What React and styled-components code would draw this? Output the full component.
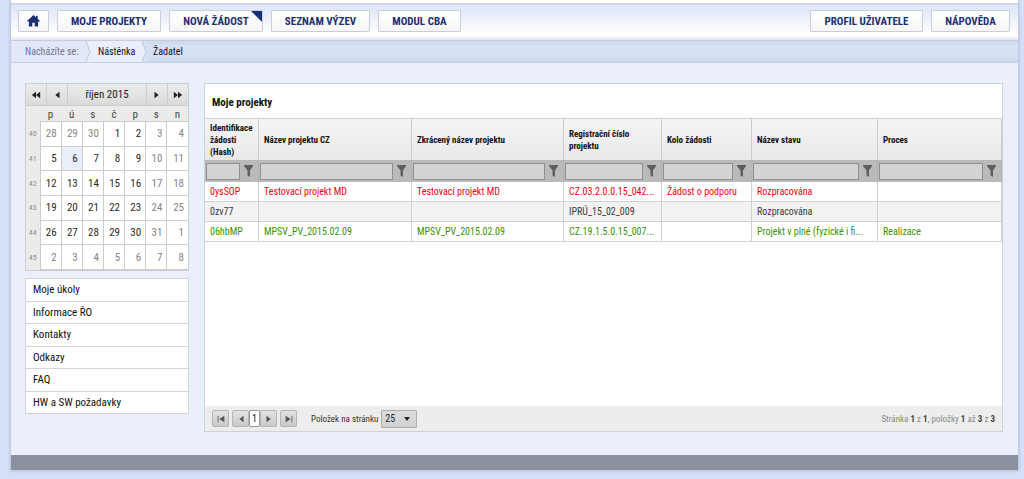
import React from "react";
import styled, { createGlobalStyle } from "styled-components";

const GlobalStyle = createGlobalStyle`
  * {
    box-sizing: border-box;
  }
  body {
    margin: 0;
    background-color: #d6dff6;
    font-family: "Roboto Condensed", "Liberation Sans Narrow", "Roboto", sans-serif;
    font-size: 11px;
    color: #111111;
  }
  button, input, select {
    font-family: inherit;
  }
`;

const Page = styled.div`
  display: flex;
  flex-direction: column;
  min-height: 100vh;
  padding: 0 5px 9px 10px;
`;
const Shell = styled.div`
  flex: 1;
  display: flex;
  flex-direction: column;
  background-color: #ebeffc;
  border-left: 1px solid #bfc8e4;
  border-right: 1px solid #bfc8e4;
  box-shadow: 0 1px 3px #b4bfdf;
`;
const Header = styled.header`
  display: flex;
  align-items: flex-start;
  justify-content: space-between;
  height: 40px;
  padding: 7px 8px 0 7px;
  border-top: 3px solid #ffffff;
  background: linear-gradient(to bottom, #ccd3e6 0, #ccd3e6 1px, #dde4f8 2px, #ffffff 31px, #ffffff 33px, #dfe4f0 37px);
`;
const Nav = styled.nav`
  display: flex;
  gap: 8px;
`;
const NavButton = styled.button`
  position: relative;
  display: flex;
  align-items: center;
  justify-content: center;
  width: ${(props) => props.$width}px;
  height: 22px;
  padding: 0;
  border: 1px solid #c9cdd8;
  border-radius: 1px;
  background: linear-gradient(to bottom, #ffffff, #f5f5f7);
  color: #1b2f72;
  font-size: 11px;
  font-weight: 700;
  white-space: nowrap;
  text-transform: uppercase;
`;
const Corner = styled.span`
  position: absolute;
  top: 0;
  right: 0;
  border-top: 11px solid #17307c;
  border-left: 11px solid transparent;
`;

const Breadcrumb = styled.nav`
  display: flex;
  align-items: stretch;
  height: 23px;
  border-top: 1px solid #c3cbdf;
  border-bottom: 1px solid #c6cfe3;
  background: linear-gradient(to bottom, #d0d8eb, #d7dff3 4px, #d7dff3 16px, #cdd6ea);
  font-size: 10px;
`;
const Crumb = styled.div`
  display: flex;
  align-items: center;
  width: ${(props) => props.$width}px;
  padding-left: ${(props) => props.$pad}px;
  background-color: ${(props) => props.$bg};
  color: #6f778c;
  white-space: nowrap;
`;
const CrumbLink = styled.a`
  color: #111111;
  text-decoration: none;
`;
const CrumbArrow = styled.svg`
  flex: none;
  width: 6px;
  height: 21px;
`;

const Main = styled.main`
  flex: 1;
  display: flex;
  align-items: stretch;
  gap: 15px;
  padding: 20px 15px 23px 14px;
`;
const Sidebar = styled.aside`
  flex: none;
  width: 164px;
  display: flex;
  flex-direction: column;
  gap: 7px;
`;

const Calendar = styled.div`
  border: 1px solid #cdcdcd;
  background-color: #ebebeb;
`;
const CalHeader = styled.div`
  display: flex;
  height: 22px;
  border-bottom: 1px solid #cccccc;
  background: linear-gradient(to bottom, #ececec, #dadada);
`;
const CalButton = styled.button`
  display: flex;
  align-items: center;
  justify-content: center;
  width: 21px;
  padding: 0;
  border: 0;
  border-right: ${(props) => (props.$left ? "1px solid #cccccc" : "0")};
  border-left: ${(props) => (props.$left ? "0" : "1px solid #cccccc")};
  background: none;
  color: #222222;
`;
const CalTitle = styled.div`
  flex: 1;
  line-height: 22px;
  text-align: center;
  color: #222222;
`;
const CalTable = styled.table`
  width: 100%;
  height: 164px;
  table-layout: fixed;
  border-collapse: collapse;
`;
const DayName = styled.th`
  width: ${(props) => (props.$week ? "14px" : "auto")};
  height: 15px;
  padding: 2px 0 0;
  color: #444444;
  font-weight: 400;
  line-height: 13px;
`;
const Week = styled.th`
  padding: 0;
  color: #8c8c8c;
  font-size: 8px;
  font-weight: 400;
`;
const Day = styled.td`
  padding: 0 4px 0 0;
  border: 1px solid #cccccc;
  border-right-width: ${(props) => (props.$last ? "0" : "1px")};
  background-color: ${(props) => (props.$today ? "#e9eefb" : "#ffffff")};
  color: ${(props) => (props.$muted ? "#858585" : "#2b2b2b")};
  text-align: right;
`;

const SideMenu = styled.ul`
  display: flex;
  flex-direction: column;
  height: 136px;
  margin: 0;
  padding: 0;
  border: 1px solid #d0d3da;
  background-color: #ffffff;
  list-style: none;
`;
const SideItem = styled.li`
  flex: 1;
  display: flex;
  align-items: center;
  padding-left: 7px;

  & + & {
    border-top: 1px solid #d6d6da;
  }
`;
const SideLink = styled.a`
  color: #111111;
  text-decoration: none;
`;

const Panel = styled.section`
  flex: 1;
  min-width: 0;
  display: flex;
  flex-direction: column;
  border: 1px solid #cdd1dc;
  background-color: #ffffff;
`;
const PanelTitle = styled.h2`
  height: 34px;
  margin: 0;
  padding: 2px 7px 0;
  font-size: 11px;
  font-weight: 700;
  line-height: 34px;
`;
const Grid = styled.table`
  width: 100%;
  table-layout: fixed;
  border-collapse: separate;
  border-spacing: 0;
`;
const Col = styled.col`
  width: ${(props) => props.$width}px;
`;
const HeadCell = styled.th`
  height: 42px;
  padding: 0 5px;
  border-top: 1px solid #cfcfcf;
  border-right: 1px solid #cccccc;
  background: linear-gradient(to bottom, #f5f5f5, #e8e8e8);
  font-size: 9px;
  font-weight: 700;
  line-height: 12px;
  text-align: left;
`;
const FilterCell = styled.td`
  height: 22px;
  padding: 0 1px;
  border-right: 1px solid #b3b3b3;
  background-color: #bababa;
`;
const FilterBox = styled.div`
  display: flex;
  align-items: center;
`;
const FilterInput = styled.input`
  flex: 1;
  min-width: 0;
  height: 17px;
  padding: 0 3px;
  border: 1px solid #8f8f8f;
  background-color: #d3d3d3;
  font-size: 10px;
`;
const FilterButton = styled.button`
  display: flex;
  align-items: center;
  justify-content: center;
  width: 17px;
  height: 17px;
  padding: 0;
  border: 0;
  background: none;
  color: #5f5f5f;
`;
const colors = { red: "#f6000f", dark: "#3b3b3b", green: "#379305" };
const Row = styled.tr`
  background-color: ${(props) => (props.$tone === "dark" ? "#f2f2f2" : "#ffffff")};
  color: ${(props) => colors[props.$tone]};
`;
const Cell = styled.td`
  height: 20px;
  padding: 0 5px;
  overflow: hidden;
  border-right: 1px solid #d0d0d0;
  border-bottom: 1px solid #d0d0d0;
  font-size: 10px;
  line-height: 18px;
  text-overflow: ellipsis;
  white-space: nowrap;
`;

const Pager = styled.footer`
  display: flex;
  align-items: center;
  height: 25px;
  margin-top: auto;
  padding: 0 7px;
  background-color: #ededed;
  font-size: 9px;
  color: #333333;
`;
const PagerGroup = styled.div`
  display: flex;
  align-items: center;
  margin: 0 3px;
`;
const PageButton = styled.button`
  display: flex;
  align-items: center;
  justify-content: center;
  width: 17px;
  height: 17px;
  padding: 0;
  border: 1px solid #b4b4b4;
  border-radius: 2px;
  background: linear-gradient(to bottom, #e3e3e3, #c9c9c9);
  color: #555555;
`;
const CurrentPage = styled.button`
  width: 11px;
  height: 17px;
  padding: 0;
  border: 1px solid #999999;
  border-radius: 1px;
  background-color: #ffffff;
  color: #222222;
  font-size: 10px;
`;
const SizeLabel = styled.label`
  margin: 0 3px 0 14px;
`;
const SizeBox = styled.div`
  position: relative;
  display: flex;
  color: #222222;
`;
const SizeSelect = styled.select`
  width: 36px;
  height: 18px;
  padding: 0 3px;
  appearance: none;
  border: 1px solid #adadad;
  border-radius: 1px;
  background: linear-gradient(to bottom, #dedede, #d0d0d0);
  color: #222222;
  font-size: 10px;
`;
const SelectArrow = styled.span`
  position: absolute;
  top: 7px;
  right: 7px;
  border-top: 4px solid #222222;
  border-left: 3px solid transparent;
  border-right: 3px solid transparent;
  pointer-events: none;
`;
const PageInfo = styled.div`
  margin-left: auto;
  color: #8a8a8a;
`;
const Count = styled.b`
  color: #444444;
`;
const BottomBar = styled.div`
  height: 15px;
  background-color: #8b909f;
`;

const arrowPaths = {
  prev: "M9 2v8L4 6z",
  next: "M3 2v8l5-4z",
  prevAll: "M6 2v8L1 6zM11 2v8L6 6z",
  nextAll: "M1 2v8l5-4zM6 2v8l5-4z",
  first: "M2 2h1v8H2zM10 2v8L4 6z",
  last: "M9 2h1v8H9zM2 2v8l6-4z",
};

const Arrow = ({ kind, size = 10 }) => (
  <svg width={size} height={size} viewBox="0 0 12 12" fill="currentColor">
    <path d={arrowPaths[kind]} />
  </svg>
);

const HomeIcon = () => (
  <svg width="13" height="12" viewBox="0 0 14 13" fill="currentColor">
    <path d="M7 0 0 6.5l1 1L2 6.6V12.5h3.7V8.5h2.6v4H12V6.6l1 .9 1-1-2.5-2.4V1H9.7v1.5z" />
  </svg>
);

const FunnelIcon = () => (
  <svg width="9" height="12" viewBox="0 0 9 12" fill="currentColor">
    <path d="M0 0h9v1L6 5.5V12l-2.5-1.5v-5L0 1z" />
  </svg>
);

const Separator = ({ left, right }) => (
  <CrumbArrow viewBox="0 0 6 20" preserveAspectRatio="none">
    <rect width="6" height="20" fill={right} />
    <path d="M0 0h1l4 10-4 10H0z" fill={left} />
    <path d="M1 0l4 10-4 10" fill="none" stroke="#c0c9df" />
  </CrumbArrow>
);

const weeks = [
  { number: 40, days: [28, 29, 30, 1, 2, 3, 4] },
  { number: 41, days: [5, 6, 7, 8, 9, 10, 11] },
  { number: 42, days: [12, 13, 14, 15, 16, 17, 18] },
  { number: 43, days: [19, 20, 21, 22, 23, 24, 25] },
  { number: 44, days: [26, 27, 28, 29, 30, 31, 1] },
  { number: 45, days: [2, 3, 4, 5, 6, 7, 8] },
];

const isMuted = (week, day, index) =>
  index > 4 || (week === 40 && day > 20) || week === 45;

const menu = [
  "Moje úkoly",
  "Informace ŘO",
  "Kontakty",
  "Odkazy",
  "FAQ",
  "HW a SW požadavky",
];

const columns = [
  { title: "Identifikace žádosti (Hash)", width: 54 },
  { title: "Název projektu CZ", width: 153 },
  { title: "Zkrácený název projektu", width: 152 },
  { title: "Registrační číslo projektu", width: 98 },
  { title: "Kolo žádosti", width: 90 },
  { title: "Název stavu", width: 126 },
  { title: "Proces", width: 124 },
];

const projects = [
  {
    tone: "red",
    cells: [
      "0ysSOP",
      "Testovací projekt MD",
      "Testovací projekt MD",
      "CZ.03.2.0.0.15_042...",
      "Žádost o podporu",
      "Rozpracována",
      "",
    ],
  },
  {
    tone: "dark",
    cells: ["0zv77", "", "", "IPRÚ_15_02_009", "", "Rozpracována", ""],
  },
  {
    tone: "green",
    cells: [
      "06hbMP",
      "MPSV_PV_2015.02.09",
      "MPSV_PV_2015.02.09",
      "CZ.19.1.5.0.15_007...",
      "",
      "Projekt v plné (fyzické i fi...",
      "Realizace",
    ],
  },
];

const App = () => {
  return (
    <Page>
      <GlobalStyle />
      <Shell>
        <Header>
          <Nav>
            <NavButton $width={31} aria-label="Domů">
              <HomeIcon />
            </NavButton>
            <NavButton $width={104}>Moje projekty</NavButton>
            <NavButton $width={94}>
              Nová žádost
              <Corner />
            </NavButton>
            <NavButton $width={99}>Seznam výzev</NavButton>
            <NavButton $width={83}>Modul CBA</NavButton>
          </Nav>
          <Nav>
            <NavButton $width={113}>Profil uživatele</NavButton>
            <NavButton $width={79}>Nápověda</NavButton>
          </Nav>
        </Header>
        <Breadcrumb>
          <Crumb $width={74} $pad={14} $bg="#e2e8f8">
            Nacházíte se:
          </Crumb>
          <Separator left="#e2e8f8" right="#ebeffc" />
          <Crumb $width={50} $pad={7} $bg="#ebeffc">
            <CrumbLink href="#">Nástěnka</CrumbLink>
          </Crumb>
          <Separator left="#ebeffc" right="#d7dff3" />
          <Crumb $pad={6}>
            <CrumbLink href="#">Žadatel</CrumbLink>
          </Crumb>
        </Breadcrumb>
        <Main>
          <Sidebar>
            <Calendar>
              <CalHeader>
                <CalButton $left aria-label="Předchozí rok">
                  <Arrow kind="prevAll" />
                </CalButton>
                <CalButton $left aria-label="Předchozí měsíc">
                  <Arrow kind="prev" />
                </CalButton>
                <CalTitle>říjen 2015</CalTitle>
                <CalButton aria-label="Další měsíc">
                  <Arrow kind="next" />
                </CalButton>
                <CalButton aria-label="Další rok">
                  <Arrow kind="nextAll" />
                </CalButton>
              </CalHeader>
              <CalTable>
                <thead>
                  <tr>
                    <DayName $week />
                    {["p", "ú", "s", "č", "p", "s", "n"].map((name, index) => (
                      <DayName key={index}>{name}</DayName>
                    ))}
                  </tr>
                </thead>
                <tbody>
                  {weeks.map((week) => (
                    <tr key={week.number}>
                      <Week>{week.number}</Week>
                      {week.days.map((day, index) => (
                        <Day
                          key={index}
                          $last={index === 6}
                          $today={week.number === 41 && day === 6}
                          $muted={
                            isMuted(week.number, day, index)
                          }
                        >
                          {day}
                        </Day>
                      ))}
                    </tr>
                  ))}
                </tbody>
              </CalTable>
            </Calendar>
            <SideMenu>
              {menu.map((item) => (
                <SideItem key={item}>
                  <SideLink href="#">{item}</SideLink>
                </SideItem>
              ))}
            </SideMenu>
          </Sidebar>
          <Panel>
            <PanelTitle>Moje projekty</PanelTitle>
            <Grid>
              <colgroup>
                {columns.map((column) => (
                  <Col key={column.title} $width={column.width} />
                ))}
              </colgroup>
              <thead>
                <tr>
                  {columns.map((column) => (
                    <HeadCell key={column.title}>{column.title}</HeadCell>
                  ))}
                </tr>
                <tr>
                  {columns.map((column) => (
                    <FilterCell key={column.title}>
                      <FilterBox>
                        <FilterInput aria-label={column.title} />
                        <FilterButton aria-label={`Filtr ${column.title}`}>
                          <FunnelIcon />
                        </FilterButton>
                      </FilterBox>
                    </FilterCell>
                  ))}
                </tr>
              </thead>
              <tbody>
                {projects.map((project) => (
                  <Row key={project.tone} $tone={project.tone}>
                    {project.cells.map((cell, index) => (
                      <Cell key={index}>{cell}</Cell>
                    ))}
                  </Row>
                ))}
              </tbody>
            </Grid>
            <Pager>
              <PageButton aria-label="První">
                <Arrow kind="first" />
              </PageButton>
              <PagerGroup>
                <PageButton aria-label="Předchozí">
                  <Arrow kind="prev" />
                </PageButton>
                <CurrentPage>1</CurrentPage>
                <PageButton aria-label="Další">
                  <Arrow kind="next" />
                </PageButton>
              </PagerGroup>
              <PageButton aria-label="Poslední">
                <Arrow kind="last" />
              </PageButton>
              <SizeLabel htmlFor="page-size">Položek na stránku</SizeLabel>
              <SizeBox>
                <SizeSelect id="page-size" defaultValue="25">
                  <option value="25">25</option>
                  <option value="50">50</option>
                </SizeSelect>
                <SelectArrow />
              </SizeBox>
              <PageInfo>
                Stránka <Count>1</Count> z <Count>1</Count>, položky{" "}
                <Count>1</Count> až <Count>3</Count> z <Count>3</Count>
              </PageInfo>
            </Pager>
          </Panel>
        </Main>
        <BottomBar />
      </Shell>
    </Page>
  );
};

export default App;
